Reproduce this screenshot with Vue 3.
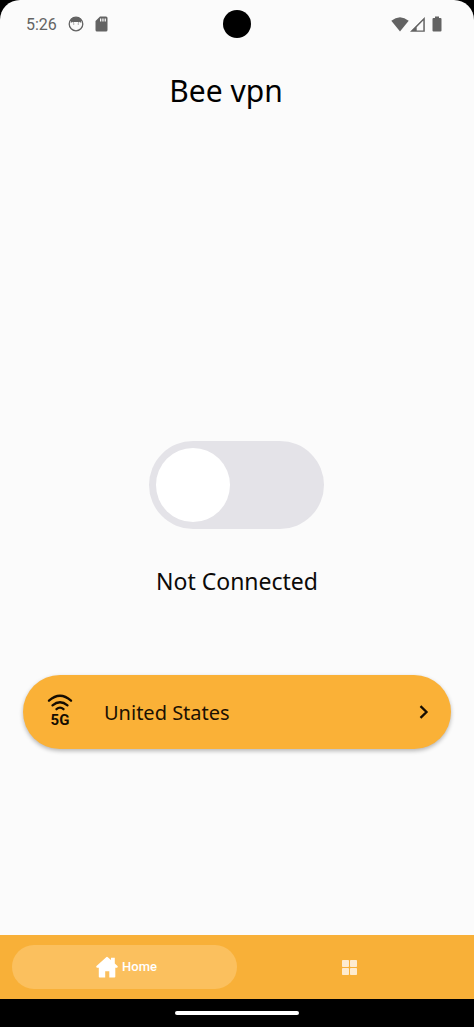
<script setup>
import { ref } from 'vue'

const connected = ref(false)
const activeTab = ref('home')
</script>

<template>
  <div class="device">
    <div class="screen">
      <header class="status">
        <div class="status-side">
          <span class="clock">5:26</span>
          <svg class="app-icon" viewBox="0 0 16 16" aria-hidden="true">
            <circle cx="8" cy="8" r="6.8" fill="none" stroke="#636363" stroke-width="1.3" />
            <path d="M2.800 7 3.200 2.800 5.600 1.200h4.800l2.400 1.600.4 4.200-1.700-1.200-.6 1-1-.9H6.100l-1 .9-.6-1z" fill="#636363" />
            <path d="M5 8h1.300M9.700 8H11" stroke="#8a8a8a" stroke-width="1" />
          </svg>
          <svg class="card-icon" viewBox="0 0 13 16" aria-hidden="true">
            <path fill="#636363" fill-rule="evenodd" d="M5 .5h6q1.500 0 1.500 1.500v12q0 1.500-1.500 1.500H2Q.5 15.500.5 14V5zM5 2.500v3h1.300v-3zm2.300 0v3h1.300v-3zm2.300 0v3h1.300v-3z" />
          </svg>
        </div>
        <span class="camera"></span>
        <div class="status-side">
          <svg class="wifi-icon" viewBox="0 0 18 15" aria-hidden="true">
            <path d="M.3 3.800Q9-3.200 17.700 3.800L9 14.500z" fill="#636363" />
          </svg>
          <svg class="signal-icon" viewBox="0 0 15 15" aria-hidden="true">
            <path fill="#636363" fill-rule="evenodd" d="M0 14.800 14.800 0v14.800zM13.300 3.600 6.700 10.200v3.200h6.600z" />
          </svg>
          <svg class="battery-icon" viewBox="0 0 10 16" aria-hidden="true">
            <path fill="#636363" d="M3 .5h4V2h1.500q1 0 1 1v11.500q0 1-1 1h-7q-1 0-1-1V3q0-1 1-1H3z" />
          </svg>
        </div>
      </header>

      <h1 class="title">Bee vpn</h1>

      <main class="content">
        <div class="space-above"></div>
        <input
          id="vpn-switch"
          v-model="connected"
          class="switch"
          type="checkbox"
          role="switch"
        />
        <label class="state" for="vpn-switch">{{ connected ? 'Connected' : 'Not Connected' }}</label>
        <button class="location" type="button">
          <svg class="network-icon" viewBox="0 0 28 36" aria-hidden="true">
            <g fill="none" stroke="#150d02" stroke-width="2.300" stroke-linecap="round">
              <path d="M3 6.700Q14-3.300 25 6.700" />
              <path d="M6.500 11.300Q14 5.300 21.500 11.300" />
              <path d="M10.500 15.200Q14 12 17.500 15.200" />
            </g>
            <text class="network-label" x="14" y="31" text-anchor="middle">5G</text>
          </svg>
          <span class="country">United States</span>
          <svg class="chevron" viewBox="0 0 10 14" aria-hidden="true">
            <path d="M1.500 1.200 7.500 7l-6 5.800" fill="none" stroke="#150d02" stroke-width="2.300" />
          </svg>
        </button>
        <div class="space-below"></div>
      </main>

      <nav class="tabs">
        <button
          class="tab"
          :class="{ active: activeTab === 'home' }"
          type="button"
          @click="activeTab = 'home'"
        >
          <svg class="home-icon" viewBox="0 0 22 22" aria-hidden="true">
            <path fill="currentColor" d="M10.200 1.200q.8-.7 1.600 0L15 4V1.800h3.800v5.600l2.700 2.500q.8 1.300-.5 1.800h-1.700v9q0 .8-.8.8h-5.200v-6.200H9.200v6.200H3.600q-.8 0-.8-.8v-9H1q-1.300-.5-.5-1.800z" />
          </svg>
          <span>Home</span>
        </button>
        <button
          class="tab"
          :class="{ active: activeTab === 'more' }"
          type="button"
          aria-label="More"
          @click="activeTab = 'more'"
        >
          <svg class="grid-icon" viewBox="0 0 15 15" aria-hidden="true">
            <g fill="currentColor">
              <rect width="7" height="7" rx=".8" />
              <rect x="8" width="7" height="7" rx=".8" />
              <rect y="8" width="7" height="7" rx=".8" />
              <rect x="8" y="8" width="7" height="7" rx=".8" />
            </g>
          </svg>
        </button>
      </nav>
    </div>
    <div class="gesture"><span class="handle"></span></div>
  </div>
</template>

<style>
body {
  margin: 0;
  background: #000;
}
</style>

<style scoped>
.device {
  display: flex;
  flex-direction: column;
  min-height: 100vh;
  background: #000;
  color: #0c0a08;
  font-family: "Noto Sans", sans-serif;
}

.screen {
  flex: 1;
  display: flex;
  flex-direction: column;
  overflow: hidden;
  border-radius: 20px 20px 0 0;
  background: #fbfbfb;
}

.status {
  display: grid;
  grid-template-columns: 1fr auto 1fr;
  align-items: center;
  height: 48px;
  padding: 0 32px 0 26px;
}

.status-side {
  display: flex;
  align-items: center;
}

.status-side:last-child {
  justify-content: flex-end;
}

.clock {
  margin-right: 11px;
  padding-top: 2px;
  color: #636363;
  font: 16px/20px Roboto, sans-serif;
}

.app-icon {
  width: 16px;
  height: 16px;
  margin-right: 11px;
}

.card-icon {
  width: 13px;
  height: 16px;
}

.camera {
  width: 28px;
  height: 28px;
  margin-left: 6px;
  border-radius: 50%;
  background: #000;
}

.wifi-icon {
  width: 18px;
  height: 15px;
  margin-right: 1px;
}

.signal-icon {
  width: 15px;
  height: 15px;
  margin-right: 7px;
}

.battery-icon {
  width: 10px;
  height: 16px;
}

.title {
  margin: 24px 22px 0 0;
  color: #000;
  font-size: 30px;
  font-weight: 400;
  line-height: 38px;
  text-align: center;
}

.content {
  flex: 1;
  display: flex;
  flex-direction: column;
  align-items: center;
  padding: 0 23px;
}

.space-above {
  flex: 16;
}

.space-below {
  flex: 9;
}

.switch {
  appearance: none;
  display: flex;
  align-items: center;
  box-sizing: border-box;
  width: 175px;
  height: 88px;
  margin: 0 2px 0 0;
  padding: 7px;
  border-radius: 44px;
  background: #e4e3e8;
  cursor: pointer;
}

.switch::before {
  content: "";
  width: 74px;
  height: 74px;
  border-radius: 50%;
  background: #fff;
}

.switch:checked {
  justify-content: flex-end;
  background: #fab137;
}

.state {
  margin: 36px 0 78px;
  font-size: 23px;
  line-height: 32px;
}

.location {
  display: flex;
  align-items: center;
  width: 100%;
  height: 74px;
  padding: 0 22px 0 23px;
  border: 0;
  border-radius: 37px;
  background: #fab137;
  box-shadow: 0 2px 4px rgba(0, 0, 0, 0.28);
  color: #1a1003;
  font: inherit;
  cursor: pointer;
}

.network-icon {
  width: 28px;
  height: 36px;
}

.network-label {
  fill: #150d02;
  font: bold 15px Roboto, sans-serif;
}

.country {
  flex: 1;
  padding: 3px 0 0 30px;
  font-size: 20px;
  line-height: 28px;
  text-align: left;
}

.chevron {
  width: 10px;
  height: 14px;
}

.tabs {
  display: grid;
  grid-template-columns: 1fr 1fr;
  padding: 10px 12px;
  background: #f8b038;
}

.tab {
  display: flex;
  align-items: center;
  justify-content: center;
  gap: 4px;
  height: 44px;
  padding: 0;
  border: 0;
  border-radius: 22px;
  background: transparent;
  color: #feebcf;
  font: 500 13px/20px Roboto, sans-serif;
  cursor: pointer;
}

.tab.active {
  padding-left: 4px;
  background: #fbc05e;
  color: #fff;
}

.home-icon {
  width: 22px;
  height: 22px;
}

.grid-icon {
  width: 15px;
  height: 15px;
}

.gesture {
  display: flex;
  align-items: center;
  justify-content: center;
  height: 28px;
}

.handle {
  width: 124px;
  height: 4px;
  border-radius: 2px;
  background: #fff;
}
</style>
